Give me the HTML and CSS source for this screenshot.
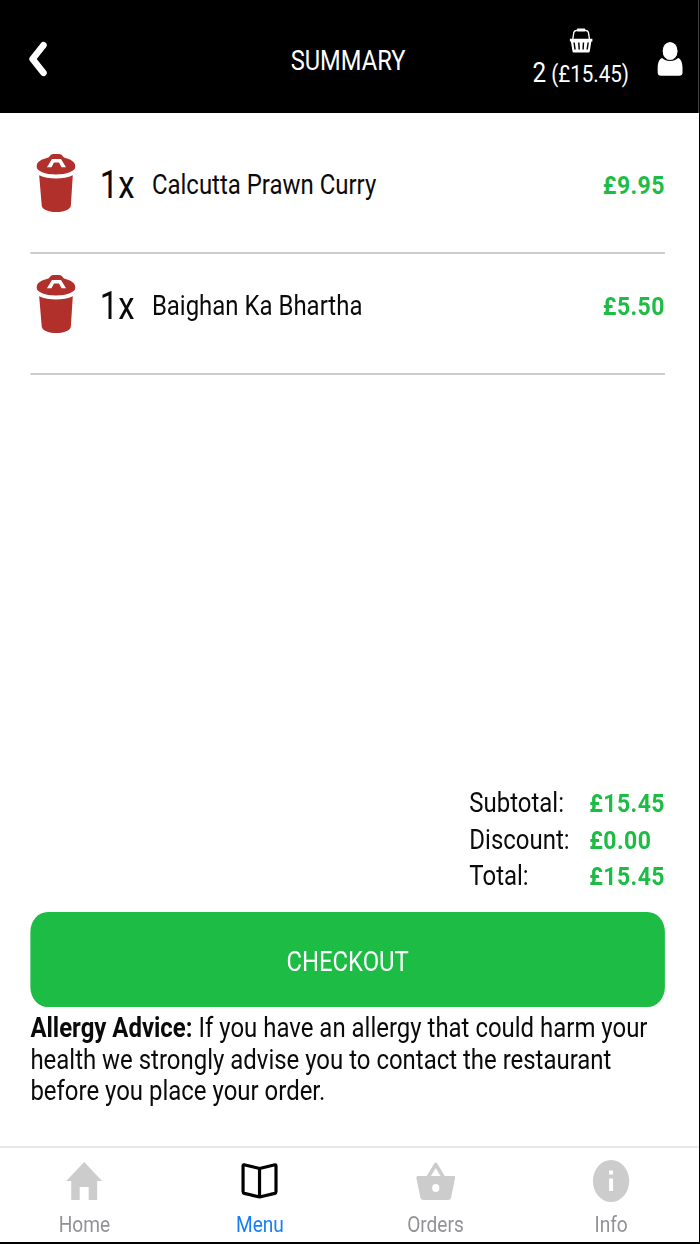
FILE: index.html
```
<!DOCTYPE html>
<html lang="en">
<head>
<meta charset="utf-8">
<title>Summary</title>
<link rel="stylesheet" href="styles.css">
</head>
<body>
<div class="screen">
<div class="app">
  <header class="header">
    <svg class="back" viewBox="0 0 20 36" preserveAspectRatio="none"><path d="M15.700 4.200 L4.800 18 L15.700 31.800" fill="none" stroke="#fff" stroke-width="6.600" stroke-linecap="round" stroke-linejoin="round"/></svg>
    <h1 class="title">SUMMARY</h1>
    <div class="cart">
      <svg class="cart-icon" viewBox="0 0 24 25" preserveAspectRatio="none">
        <path d="M3.500 11 L4.500 4.500 Q5 2.800 7 2.500 L9 2 H15 L17 2.500 Q19 2.800 19.500 4.500 L20.500 11" fill="none" stroke="#fff" stroke-width="1.400"/>
        <path d="M8 .6 H16 V3.600 H8Z" fill="#fff"/>
        <path d="M.4 10.800 H23.600 V13.600 H22.500 L20.800 23.600 Q20.600 24.600 19.600 24.600 H4.400 Q3.400 24.600 3.200 23.600 L1.500 13.600 H.4Z" fill="#fff"/>
        <path d="M4.800 14.500 L5.800 21.500 M9.600 14.500 L10 21.500 M14.400 14.500 L14 21.500 M19.200 14.500 L18.200 21.500" stroke="#000" stroke-width="1.500"/>
      </svg>
      <div class="cart-text"><span class="cart-count">2</span> (£15.45)</div>
    </div>
    <svg class="user" viewBox="0 0 26 36" preserveAspectRatio="none">
      <path d="M5 17 C2 18 .6 22 .6 27 V31.500 Q.6 34.800 4 34.800 H22 Q25.400 34.800 25.400 31.500 V27 C25.400 22 24 18 21 17 C17 21 9 21 5 17Z" fill="#fff"/>
      <ellipse cx="13" cy="10" rx="8" ry="9.600" fill="#fff" stroke="#000" stroke-width="1"/>
    </svg>
  </header>

  <main class="content">
    <ul class="items">
      <li class="item">
        <svg class="trash" viewBox="0 0 39 58" preserveAspectRatio="none">
          <path d="M0 12.500 C0 8 5 5 12 3.500 L14.500 .7 Q15.500 0 17 0 H22.500 Q24 0 25 .7 L27.500 3.500 C34 5 39 8 39 12.500 C39 17 30 20.500 19.500 20.500 S0 17 0 12.500Z" fill="#b2302c"/>
          <path d="M10.500 13.300 L15.500 5 H24.500 L29.500 13.300 H25 L22.500 8.600 H17.500 L15 13.300Z" fill="#fff"/>
          <path d="M2.700 21.200 C12 25.500 27 25.500 36.300 21.200 L34.300 52 C32 60 7.600 60 5.300 52Z" fill="#b2302c"/>
        </svg>
        <span class="qty">1x</span>
        <span class="name">Calcutta Prawn Curry</span>
        <span class="price">£9.95</span>
      </li>
      <li class="item">
        <svg class="trash" viewBox="0 0 39 58" preserveAspectRatio="none">
          <path d="M0 12.500 C0 8 5 5 12 3.500 L14.500 .7 Q15.500 0 17 0 H22.500 Q24 0 25 .7 L27.500 3.500 C34 5 39 8 39 12.500 C39 17 30 20.500 19.500 20.500 S0 17 0 12.500Z" fill="#b2302c"/>
          <path d="M10.500 13.300 L15.500 5 H24.500 L29.500 13.300 H25 L22.500 8.600 H17.500 L15 13.300Z" fill="#fff"/>
          <path d="M2.700 21.200 C12 25.500 27 25.500 36.300 21.200 L34.300 52 C32 60 7.600 60 5.300 52Z" fill="#b2302c"/>
        </svg>
        <span class="qty">1x</span>
        <span class="name">Baighan Ka Bhartha</span>
        <span class="price">£5.50</span>
      </li>
    </ul>

    <div class="totals">
      <span>Subtotal:</span><span class="amount">£15.45</span>
      <span>Discount:</span><span class="amount">£0.00</span>
      <span>Total:</span><span class="amount">£15.45</span>
    </div>

    <button class="checkout">CHECKOUT</button>
    <p class="advice"><b>Allergy Advice:</b> If you have an allergy that could harm your<br>health we strongly advise you to contact the restaurant<br>before you place your order.</p>
  </main>

  <nav class="tabs">
    <a class="tab">
      <svg class="tab-icon" viewBox="0 0 40 44" preserveAspectRatio="none"><path d="M20 3 L38 22 H33 V41 H24.500 V28 H15.500 V41 H7 V22 H2Z" fill="#ccc"/></svg>
      <span>Home</span>
    </a>
    <a class="tab active">
      <svg class="tab-icon" viewBox="0 0 40 44" preserveAspectRatio="none"><path d="M20 9.500 L4.500 5.800 Q3.500 5.600 3.500 7 V32.500 Q3.500 34 4.800 34.400 L20 38 L35.200 34.400 Q36.500 34 36.500 32.500 V7 Q36.500 5.600 35.500 5.800Z M20 9.500 V38" fill="none" stroke="#000" stroke-width="3.200" stroke-linejoin="round"/></svg>
      <span>Menu</span>
    </a>
    <a class="tab">
      <svg class="tab-icon" viewBox="0 0 40 44" preserveAspectRatio="none">
        <path d="M12.500 18 L20 5.500 L27.500 18" fill="none" stroke="#ccc" stroke-width="3.600" stroke-linejoin="round"/>
        <path d="M2 17 H38 Q39.800 17 39.400 19 L35.500 38 Q35 41 32.500 41 H7.500 Q5 41 4.500 38 L.6 19 Q.2 17 2 17Z" fill="#ccc"/>
        <ellipse cx="20" cy="29" rx="3.600" ry="4.100" fill="#fff"/>
      </svg>
      <span>Orders</span>
    </a>
    <a class="tab">
      <svg class="tab-icon" viewBox="0 0 40 44" preserveAspectRatio="none"><ellipse cx="20" cy="22" rx="18.200" ry="21" fill="#ccc"/><path d="M18 11.500 H22 V15.500 H18Z M18 19.500 H22 V32 H18Z" fill="#fff"/></svg>
      <span>Info</span>
    </a>
  </nav>
</div>
</div>
</body>
</html>
```
FILE: styles.css
```
* { box-sizing: border-box; }

body {
  margin: 0;
  background: #000;
  font-family: Roboto, "Liberation Sans", sans-serif;
}

.screen {
  width: 700px;
  height: 1244px;
  overflow: hidden;
  background: #000;
}

/* The layout is 805px wide and condensed horizontally to fit the screen. */
.app {
  display: flex;
  flex-direction: column;
  width: 805px;
  height: 1242px;
  background: #fff;
  color: #0a0a0a;
  font-size: 27.600px;
  transform: scaleX(0.868);
  transform-origin: 0 0;
}

.header {
  display: grid;
  grid-template-columns: 200px 402px 134px 1fr;
  height: 113px;
  background: #000;
  color: #fff;
}

.back {
  width: 23px;
  height: 36px;
  margin: 41px 0 0 32px;
}

.title {
  margin: 45px 0 0;
  font-size: 27.300px;
  font-weight: 400;
  line-height: 32px;
  text-align: center;
}

.cart {
  display: flex;
  flex-direction: column;
  align-items: center;
  padding-top: 28px;
}

.cart-icon {
  width: 27px;
  height: 25px;
}

.cart-text {
  margin-top: 3px;
  font-size: 23.700px;
  line-height: 34px;
  white-space: nowrap;
}

.cart-count { font-size: 28px; }

.user {
  width: 30px;
  height: 36px;
  margin: 41px 0 0 21px;
}

.content {
  display: flex;
  flex-direction: column;
  flex: 1;
  padding: 20px 39px 0 35px;
}

.items {
  flex: 1;
  margin: 0;
  padding: 0;
  list-style: none;
}

.item {
  display: flex;
  align-items: flex-start;
  height: 121px;
  padding-top: 21px;
  border-bottom: 2px solid #ccc;
  line-height: 62px;
}

.trash {
  width: 45px;
  height: 58px;
  margin: 0 28px 0 7px;
}

.qty {
  width: 60px;
  font-size: 38px;
}

.name { flex: 1; }

.price,
.amount {
  color: #1cbc45;
  font-size: 26.500px;
  font-weight: 700;
  letter-spacing: 0.500px;
}

.totals {
  display: grid;
  grid-template-columns: 138px auto;
  align-self: flex-end;
  line-height: 36.700px;
}

.checkout {
  height: 95px;
  margin-top: 17px;
  padding: 4px 0 0;
  border: 0;
  border-radius: 20px;
  background: #1cbc45;
  color: #fff;
  font: 400 27.500px Roboto, "Liberation Sans", sans-serif;
}

.advice {
  height: 139px;
  margin: 0;
  padding-top: 5px;
  line-height: 31.500px;
  white-space: nowrap;
}

.tabs {
  display: grid;
  grid-template-columns: repeat(4, 202.300px);
  height: 96px;
  margin-left: -4px;
  border-top: 2px solid #e8e8e8;
}

.tab {
  display: flex;
  flex-direction: column;
  align-items: center;
  padding-top: 11px;
  color: #929297;
  font-size: 22px;
  line-height: 26px;
}

.tab.active { color: #157efb; }

.tab-icon {
  width: 46px;
  height: 44px;
  margin-bottom: 9px;
}
```
